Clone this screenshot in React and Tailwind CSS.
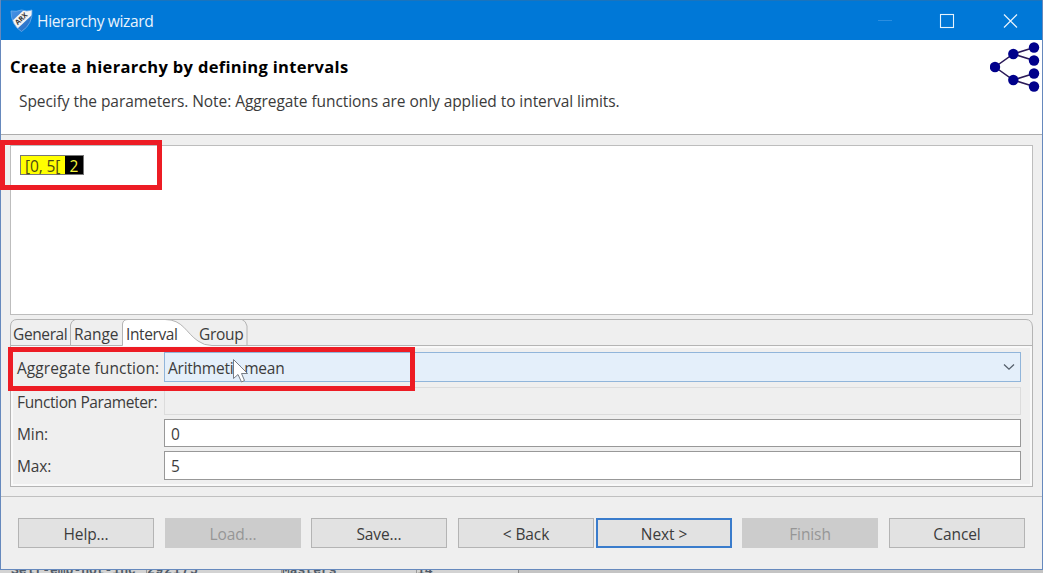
import React from "react";

const FONT = "font-['Open_Sans','Noto_Sans',sans-serif]";

function Shield() {
  return (
    <svg width="24" height="24" viewBox="0 0 24 24" className="shrink-0">
      <defs>
        <linearGradient id="sh" x1="0" y1="0" x2="1" y2="1">
          <stop offset="0" stopColor="#4a96e8" />
          <stop offset="1" stopColor="#1f66bd" />
        </linearGradient>
        <clipPath id="shc">
          <path d="M1 2Q6 3 11.500 1Q17 3 22 1Q23 15 11.500 22.500Q1 16 1 2Z" />
        </clipPath>
      </defs>
      <g clipPath="url(#shc)">
        <rect width="24" height="24" fill="url(#sh)" />
        <path d="M1 13L15 0H24V4L7 20Z" fill="#f3f4f4" />
        <text x="11.500" y="12" transform="rotate(-43 11.500 10)" textAnchor="middle" fontSize="7" fontWeight="700" fontFamily="Open Sans, sans-serif" fill="#333">ARX</text>
      </g>
      <path d="M1 2Q6 3 11.500 1Q17 3 22 1Q23 15 11.500 22.500Q1 16 1 2Z" fill="none" stroke="#70adea" strokeWidth="0.8" />
    </svg>
  );
}

function TreeIcon() {
  const nodes = [[5, 27], [23.300, 14], [23.300, 40], [44, 7.500], [44, 20.500], [44, 33.500], [44, 46.500]];
  return (
    <svg width="52" height="54" viewBox="0 0 52 54" className="shrink-0">
      <path d="M44 7.500L23.300 14L5 27L23.300 40L44 46.500M23.300 14L44 20.500M23.300 40L44 33.500" stroke="#2b1a58" strokeWidth="1.500" fill="none" />
      {nodes.map(([x, y]) => <circle key={x + "-" + y} cx={x} cy={y} r="5.200" fill="#00008b" />)}
    </svg>
  );
}

function TitleBar() {
  return (
    <div className="flex h-10 shrink-0 items-center border-t border-[#1b74bd] bg-[#0078d7] pl-[9px]">
      <Shield />
      <span className="mt-[2px] ml-[3px] text-[15.600px] tracking-[-0.370px] text-[#e8f3fc]">Hierarchy wizard</span>
      <svg width="164" height="38" viewBox="0 0 164 38" className="ml-auto" fill="none">
        <path d="M0 18.500H14" stroke="#2b8ee0" strokeWidth="1" />
        <rect x="62.500" y="12.500" width="13" height="13" stroke="#e6f3fc" strokeWidth="1.100" />
        <path d="M126 12.500L139 25.500M139 12.500L126 25.500" stroke="#e6f3fc" strokeWidth="1.200" />
      </svg>
    </div>
  );
}

function Header() {
  return (
    <div className="flex h-[95px] shrink-0 justify-between border-b border-[#adadad] bg-white">
      <div className="flex flex-col">
        <h1 className="mt-[15px] ml-[9px] text-[16.500px] leading-6 font-bold tracking-[0.320px] whitespace-nowrap text-black">Create a hierarchy by defining intervals</h1>
        <p className="mt-[10px] ml-[18px] text-[15.500px] leading-6 tracking-[-0.070px] whitespace-nowrap text-[#3b3b3b]">Specify the parameters. Note: Aggregate functions are only applied to interval limits.</p>
      </div>
      <TreeIcon />
    </div>
  );
}

function IntervalCanvas() {
  return (
    <div className="flex h-[170px] shrink-0 items-start border border-[#bdbdbd] bg-white pt-[9px] pl-[9px]">
      <div className="flex h-[20px] border border-[#777] text-[15.500px] leading-[20px]">
        <span className="h-[18px] w-[44px] bg-[#ffff00] pl-[4px] tracking-[-0.100px] whitespace-nowrap text-[#4b4b14]">[0, 5[</span>
        <span className="h-[18px] w-[18px] bg-black text-center text-[#f4f43c]">2</span>
      </div>
    </div>
  );
}

function TabStrip() {
  return (
    <div className="relative h-[27px] shrink-0">
      <svg width="1023" height="27" viewBox="0 0 1023 27" fill="none" className="absolute inset-0">
        <path d="M112.500 27V5Q113 0.500 118 0.500H155C173 0.500 176 14 188 22Q194 26.500 202 26.500V27Z" fill="#fff" />
        <path d="M0.500 27V7Q1 0.500 7 0.500H1016Q1022 0.500 1022.500 8V27M0 26.500H112.500V5Q113 0.500 118 0.500H155C173 0.500 176 14 188 22Q194 26.500 202 26.500H1023M60.500 26V6Q61 2 65 0.500M237 26V7Q236 2 232 0.500" stroke="#b4b4b4" />
      </svg>
      <div className="relative flex h-[27px] items-center pt-[5px] pl-[3px] text-[15.500px] tracking-[-0.380px] text-[#3c3c3c]">
        <span className="w-[61px]">General</span>
        <span className="w-[52px] tracking-[-0.100px]">Range</span>
        <span className="w-[73px]">Interval</span>
        <span className="tracking-[-0.300px]">Group</span>
      </div>
    </div>
  );
}

function Label({ children, className = "tracking-[-0.100px]" }) {
  return <span className={"w-[147px] shrink-0 pt-[3px] whitespace-nowrap " + className}>{children}</span>;
}

function Form() {
  return (
    <div className="flex grow flex-col border-x border-b border-[#b4b4b4]">
      <div className="flex grow flex-col border-2 border-[#f9f9f9] pt-[4px] pr-[9px] pl-[4px] text-[15.500px] tracking-[-0.100px] text-[#3c3c3c]">
        <div className="flex h-[30px] items-center">
          <Label className="tracking-[0.060px]">Aggregate function:</Label>
          <div className="flex h-[30px] grow items-center justify-between border border-[#91b5da] bg-[#e4effa] pr-[5px] pl-[3px]">
            <span className="pt-[3px] tracking-[-0.250px]">Arithmetic mean</span>
            <svg width="12" height="8" viewBox="0 0 12 8" fill="none" stroke="#555f6a" strokeWidth="1.300"><path d="M1 1.500L6 6.200L11 1.500" /></svg>
          </div>
        </div>
        <div className="mt-[5px] flex h-[28px] items-center">
          <Label className="tracking-[-0.370px]">Function Parameter:</Label>
          <div className="h-[28px] grow border border-[#dcdcdc]" />
        </div>
        <div className="mt-[4px] flex h-[28px] items-center">
          <Label>Min:</Label>
          <div className="flex h-[28px] grow items-center border border-[#989898] bg-white pt-[3px] pl-[6px]">0</div>
        </div>
        <div className="mt-[4px] flex h-[29px] items-center">
          <Label>Max:</Label>
          <div className="flex h-[29px] grow items-center border border-[#989898] bg-white pt-[3px] pl-[6px]">5</div>
        </div>
      </div>
    </div>
  );
}

const BTN = "flex h-[30px] w-[136px] items-center justify-center pt-[4px] ";
const NORMAL = BTN + "border border-[#b4b4b4] bg-[#e2e2e2] text-[#3c3c3c]";
const DISABLED = BTN + "bg-[#cccccc] text-[#969696]";
const PRIMARY = BTN + "border-2 border-[#3a7ccc] bg-[#e2e2e2] text-[#3c3c3c]";

function Footer() {
  return (
    <div className="mt-[9px] flex grow items-start border-t border-[#c0c0c0] pt-[21px] pl-[17px] text-[15.500px] tracking-[-0.100px]">
      <button className={NORMAL}>Help...</button>
      <button className={DISABLED + " ml-[11px]"}>Load...</button>
      <button className={NORMAL + " ml-[10px]"}>Save...</button>
      <button className={NORMAL + " ml-[11px]"}>&lt; Back</button>
      <button className={PRIMARY + " ml-[2px]"}>Next &gt;</button>
      <button className={DISABLED + " ml-[10px]"}>Finish</button>
      <button className={NORMAL + " ml-[11px]"}>Cancel</button>
    </div>
  );
}

export default function App() {
  return (
    <div className={"relative flex h-[573px] w-[1043px] flex-col overflow-hidden bg-[#d3d3d3] " + FONT}>
      <div className="flex h-[570px] shrink-0 flex-col border-r border-b border-l border-[#6689bd] bg-[#efefef]">
        <TitleBar />
        <Header />
        <div className="mt-[10px] mr-[9px] ml-[9px] flex h-[342px] shrink-0 flex-col">
          <IntervalCanvas />
          <div className="mt-[4px] flex grow flex-col">
            <TabStrip />
            <Form />
          </div>
        </div>
        <Footer />
      </div>
      <div className="flex h-[3px] shrink-0 overflow-hidden font-['Liberation_Mono',monospace] text-[13px] leading-[1px] font-bold text-[#505b69]">
        <span className="ml-[11px] w-[135px] shrink-0 whitespace-nowrap">Self-emp-not-inc</span>
        <span className="w-[135px] shrink-0 border-l border-[#999] tracking-[0.800px]">292175</span>
        <span className="w-[135px] shrink-0 border-l border-[#999]">Masters</span>
        <span className="w-[102px] shrink-0 border-l border-[#999]">14</span>
        <span className="grow border-l border-[#888] bg-[#c4c4c4]" />
      </div>
      <div className="absolute top-[140px] left-0 h-[50px] w-[162px] border-[5px] border-[#ed1c24]" />
      <div className="absolute top-[347px] left-[8px] h-[44px] w-[407px] border-[5px] border-[#ed1c24]" />
      <svg className="absolute top-[358px] left-[232px]" width="18" height="26" viewBox="0 0 18 26">
        <path d="M1.500 1.500V20.500L6 16.500L9.500 24L12.500 22.500L9.500 15.500H15.500Z" fill="#fff" stroke="#777c84" strokeWidth="1" />
      </svg>
    </div>
  );
}
